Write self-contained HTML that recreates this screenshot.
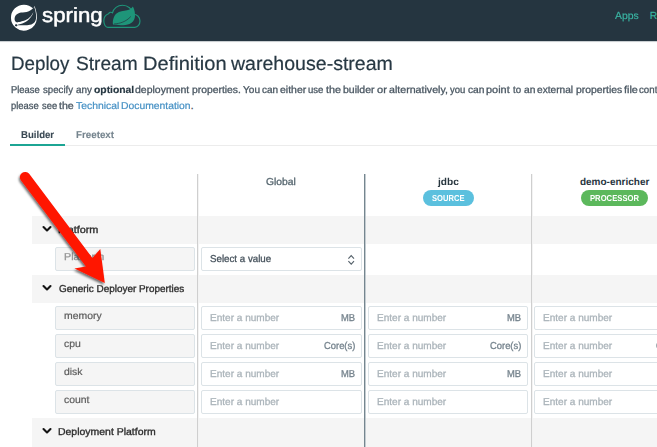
<!DOCTYPE html>
<html><head><meta charset="utf-8"><style>
html,body{margin:0;padding:0;}
body{width:657px;height:447px;overflow:hidden;position:relative;background:#fff;font-family:"Liberation Sans",sans-serif;text-rendering:geometricPrecision;}
</style></head><body>
<div style="position:absolute;left:0px;top:0px;width:657px;height:41px;background:#253540;"></div>
<div style="position:absolute;left:0px;top:41px;width:657px;height:1px;background:#c9ced1;"></div>
<div style="position:absolute;left:0px;top:42px;width:657px;height:1px;background:#fbfbfb;"></div>
<svg style="position:absolute;left:0;top:0" width="150" height="40" viewBox="0 0 150 40">
<g transform="translate(11,4.64) scale(0.405)"><path fill="#fff" d="M58.2,3.365a29.503,29.503,0,0,1-3.419,6.064A32.094,32.094,0,1,0,9.965,55.372l1.186,1.047a32.08,32.08,0,0,0,52.67-22.253C64.7,26.08,62.4,15.722,58.2,3.365ZM14.731,52.619a2.725,2.725,0,1,1-.222-3.844A2.723,2.723,0,0,1,14.731,52.619Z"/></g>
<g transform="translate(36.2,25.5) scale(1.21,1.1) translate(-35.8,-25.3) translate(11,4.64) scale(0.405)"><path fill="#253540" d="M58.309,43.01c-7.924,10.561-24.85,7.0-35.7,7.511,0,0-1.923.115-3.859.432,0,0,.728-.31,1.669-.663,7.618-2.651,11.22-3.166,15.851-5.546,8.7-4.437,17.34-14.149,19.108-24.232C52.064,30.292,43.824,37.6,36.3,40.384c-5.149,1.9-14.459,3.747-14.459,3.747l-.38-.2c-6.343-3.085-6.531-16.826,5-21.254,5.051-1.944,9.88-.877,15.337-2.178,5.822-1.385,12.56-5.755,15.3-11.456C60.168,18.064,63.958,35.5,58.309,43.01Z"/></g>
<path d="M107.8,27.3 L134.8,27.3 C137.8,27.3 140,24.4 140,21 C140,17.3 137.2,14.3 133.4,14.3 C132.3,9 127.8,5.2 122.5,5.2 C117.6,5.2 113.5,8.5 112.5,12.8 C111,11.8 109,12.2 108.5,13.8 C105.8,14.8 103.8,17.6 103.8,20.8 C103.8,24.5 105.6,27.3 107.8,27.3 Z" fill="none" stroke="#1e9579" stroke-width="1.15"/>
<path d="M113,24.6 C112.4,21 113.5,15.8 116.5,13.4 C119.5,11.2 123.5,10.8 127,10.3 C129.8,9.8 131.5,8.6 132.9,6.6 C134.6,9.5 135.4,14 134.9,17 C134.5,20.2 132.5,22.6 129.5,24 C125.5,25.6 118,25.4 113,24.6 Z" fill="#1e9579"/>
<path d="M114,24 C120,23.5 126,21.8 130.8,16.5" fill="none" stroke="#253540" stroke-width="0.7"/>
</svg>
<div style="position:absolute;left:41.68px;top:16px;font-size:20.5px;line-height:0;white-space:nowrap;color:#ffffff;font-weight:normal;transform:scaleX(1.0861);transform-origin:0 0;-webkit-text-stroke:0.5px #ffffff;">spring</div>
<div style="position:absolute;left:614.58px;top:17px;font-size:10.3px;line-height:0;white-space:nowrap;color:#3ab5a3;font-weight:normal;transform:scaleX(1.0138);transform-origin:0 0;-webkit-text-stroke:0.15px #3ab5a3;">Apps</div>
<div style="position:absolute;left:649.66px;top:17px;font-size:10.3px;line-height:0;white-space:nowrap;color:#3ab5a3;font-weight:normal;-webkit-text-stroke:0.15px #3ab5a3;">R</div>
<div style="position:absolute;left:11.16px;top:64px;font-size:19.37px;line-height:0;white-space:nowrap;color:#273843;font-weight:normal;transform:scaleX(0.9698);transform-origin:0 0;-webkit-text-stroke:0.2px #273843;">Deploy</div>
<div style="position:absolute;left:75.54px;top:64px;font-size:19.37px;line-height:0;white-space:nowrap;color:#273843;font-weight:normal;transform:scaleX(0.9887);transform-origin:0 0;-webkit-text-stroke:0.2px #273843;">Stream</div>
<div style="position:absolute;left:142.55px;top:64px;font-size:19.37px;line-height:0;white-space:nowrap;color:#273843;font-weight:normal;transform:scaleX(1.0359);transform-origin:0 0;-webkit-text-stroke:0.2px #273843;">Definition</div>
<div style="position:absolute;left:231.12px;top:64px;font-size:19.37px;line-height:0;white-space:nowrap;color:#273843;font-weight:normal;transform:scaleX(1.0098);transform-origin:0 0;-webkit-text-stroke:0.2px #273843;">warehouse-stream</div>
<div style="position:absolute;left:10.93px;top:91px;font-size:10px;line-height:0;white-space:nowrap;color:#4a5762;font-weight:normal;transform:scaleX(0.9417);transform-origin:0 0;-webkit-text-stroke:0.3px #4a5762;">Please</div>
<div style="position:absolute;left:42.73px;top:91px;font-size:10px;line-height:0;white-space:nowrap;color:#4a5762;font-weight:normal;transform:scaleX(0.9669);transform-origin:0 0;-webkit-text-stroke:0.3px #4a5762;">specify</div>
<div style="position:absolute;left:75.58px;top:91px;font-size:10px;line-height:0;white-space:nowrap;color:#4a5762;font-weight:normal;transform:scaleX(0.9885);transform-origin:0 0;-webkit-text-stroke:0.3px #4a5762;">any</div>
<div style="position:absolute;left:93.70px;top:91px;font-size:10px;line-height:0;white-space:nowrap;color:#273843;font-weight:bold;transform:scaleX(1.0349);transform-origin:0 0;-webkit-text-stroke:0.15px #273843;">optional</div>
<div style="position:absolute;left:135.46px;top:91px;font-size:10px;line-height:0;white-space:nowrap;color:#4a5762;font-weight:normal;transform:scaleX(1.0486);transform-origin:0 0;-webkit-text-stroke:0.3px #4a5762;">deployment</div>
<div style="position:absolute;left:192.14px;top:91px;font-size:10px;line-height:0;white-space:nowrap;color:#4a5762;font-weight:normal;transform:scaleX(1.0350);transform-origin:0 0;-webkit-text-stroke:0.3px #4a5762;">properties.</div>
<div style="position:absolute;left:242.98px;top:91px;font-size:10px;line-height:0;white-space:nowrap;color:#4a5762;font-weight:normal;transform:scaleX(1.0069);transform-origin:0 0;-webkit-text-stroke:0.3px #4a5762;">You</div>
<div style="position:absolute;left:261.68px;top:91px;font-size:10px;line-height:0;white-space:nowrap;color:#4a5762;font-weight:normal;transform:scaleX(0.9967);transform-origin:0 0;-webkit-text-stroke:0.3px #4a5762;">can</div>
<div style="position:absolute;left:279.86px;top:91px;font-size:10px;line-height:0;white-space:nowrap;color:#4a5762;font-weight:normal;transform:scaleX(1.0479);transform-origin:0 0;-webkit-text-stroke:0.3px #4a5762;">either</div>
<div style="position:absolute;left:308.48px;top:91px;font-size:10px;line-height:0;white-space:nowrap;color:#4a5762;font-weight:normal;transform:scaleX(0.9581);transform-origin:0 0;-webkit-text-stroke:0.3px #4a5762;">use</div>
<div style="position:absolute;left:325.94px;top:91px;font-size:10px;line-height:0;white-space:nowrap;color:#4a5762;font-weight:normal;transform:scaleX(1.0819);transform-origin:0 0;-webkit-text-stroke:0.3px #4a5762;">the</div>
<div style="position:absolute;left:342.83px;top:91px;font-size:10px;line-height:0;white-space:nowrap;color:#4a5762;font-weight:normal;transform:scaleX(1.0507);transform-origin:0 0;-webkit-text-stroke:0.3px #4a5762;">builder</div>
<div style="position:absolute;left:376.74px;top:91px;font-size:10px;line-height:0;white-space:nowrap;color:#4a5762;font-weight:normal;transform:scaleX(1.1071);transform-origin:0 0;-webkit-text-stroke:0.3px #4a5762;">or</div>
<div style="position:absolute;left:388.65px;top:91px;font-size:10px;line-height:0;white-space:nowrap;color:#4a5762;font-weight:normal;transform:scaleX(1.0632);transform-origin:0 0;-webkit-text-stroke:0.3px #4a5762;">alternatively,</div>
<div style="position:absolute;left:450.27px;top:91px;font-size:10px;line-height:0;white-space:nowrap;color:#4a5762;font-weight:normal;transform:scaleX(0.9527);transform-origin:0 0;-webkit-text-stroke:0.3px #4a5762;">you</div>
<div style="position:absolute;left:467.97px;top:91px;font-size:10px;line-height:0;white-space:nowrap;color:#4a5762;font-weight:normal;transform:scaleX(1.0233);transform-origin:0 0;-webkit-text-stroke:0.3px #4a5762;">can</div>
<div style="position:absolute;left:486.30px;top:91px;font-size:10px;line-height:0;white-space:nowrap;color:#4a5762;font-weight:normal;transform:scaleX(1.0915);transform-origin:0 0;-webkit-text-stroke:0.3px #4a5762;">point</div>
<div style="position:absolute;left:512.86px;top:91px;font-size:10px;line-height:0;white-space:nowrap;color:#4a5762;font-weight:normal;transform:scaleX(0.9653);transform-origin:0 0;-webkit-text-stroke:0.3px #4a5762;">to</div>
<div style="position:absolute;left:523.87px;top:91px;font-size:10px;line-height:0;white-space:nowrap;color:#4a5762;font-weight:normal;transform:scaleX(1.0249);transform-origin:0 0;-webkit-text-stroke:0.3px #4a5762;">an</div>
<div style="position:absolute;left:537.27px;top:91px;font-size:10px;line-height:0;white-space:nowrap;color:#4a5762;font-weight:normal;transform:scaleX(1.0151);transform-origin:0 0;-webkit-text-stroke:0.3px #4a5762;">external</div>
<div style="position:absolute;left:576.13px;top:91px;font-size:10px;line-height:0;white-space:nowrap;color:#4a5762;font-weight:normal;transform:scaleX(1.0398);transform-origin:0 0;-webkit-text-stroke:0.3px #4a5762;">properties</div>
<div style="position:absolute;left:624.25px;top:91px;font-size:10px;line-height:0;white-space:nowrap;color:#4a5762;font-weight:normal;transform:scaleX(1.0820);transform-origin:0 0;-webkit-text-stroke:0.3px #4a5762;">file</div>
<div style="position:absolute;left:639.49px;top:91px;font-size:10px;line-height:0;white-space:nowrap;color:#4a5762;font-weight:normal;transform:scaleX(0.9700);transform-origin:0 0;-webkit-text-stroke:0.3px #4a5762;">containing</div>
<div style="position:absolute;left:11.10px;top:107px;font-size:10px;line-height:0;white-space:nowrap;color:#4a5762;font-weight:normal;transform:scaleX(0.9405);transform-origin:0 0;-webkit-text-stroke:0.3px #4a5762;">please</div>
<div style="position:absolute;left:41.54px;top:107px;font-size:10px;line-height:0;white-space:nowrap;color:#4a5762;font-weight:normal;transform:scaleX(0.9351);transform-origin:0 0;-webkit-text-stroke:0.3px #4a5762;">see</div>
<div style="position:absolute;left:59.14px;top:107px;font-size:10px;line-height:0;white-space:nowrap;color:#4a5762;font-weight:normal;transform:scaleX(1.0594);transform-origin:0 0;-webkit-text-stroke:0.3px #4a5762;">the</div>
<div style="position:absolute;left:75.87px;top:107px;font-size:10px;line-height:0;white-space:nowrap;color:#4590c4;font-weight:normal;transform:scaleX(1.0392);transform-origin:0 0;-webkit-text-stroke:0.2px #4590c4;">Technical</div>
<div style="position:absolute;left:121.25px;top:107px;font-size:10px;line-height:0;white-space:nowrap;color:#4590c4;font-weight:normal;transform:scaleX(1.0351);transform-origin:0 0;-webkit-text-stroke:0.2px #4590c4;">Documentation</div>
<div style="position:absolute;left:190.69px;top:107px;font-size:10px;line-height:0;white-space:nowrap;color:#4a5762;font-weight:normal;-webkit-text-stroke:0.3px #4a5762;">.</div>
<div style="position:absolute;left:21.36px;top:136px;font-size:10px;line-height:0;white-space:nowrap;color:#3a4954;font-weight:bold;transform:scaleX(0.9605);transform-origin:0 0;-webkit-text-stroke:0.1px #3a4954;">Builder</div>
<div style="position:absolute;left:76.04px;top:136px;font-size:10px;line-height:0;white-space:nowrap;color:#75848e;font-weight:bold;transform:scaleX(0.9785);transform-origin:0 0;-webkit-text-stroke:0.1px #75848e;">Freetext</div>
<div style="position:absolute;left:10px;top:145px;width:647px;height:1px;background:#ececec;"></div>
<div style="position:absolute;left:10px;top:144px;width:55px;height:2px;background:#1ca594;"></div>
<div style="position:absolute;left:32px;top:216px;width:625px;height:28px;background:#f5f5f5;"></div>
<div style="position:absolute;left:32px;top:275px;width:625px;height:28px;background:#f5f5f5;"></div>
<div style="position:absolute;left:32px;top:418px;width:625px;height:29px;background:#f5f5f5;"></div>
<div style="position:absolute;left:197px;top:174px;width:1px;height:273px;background:#cfcfcf;"></div>
<div style="position:absolute;left:198px;top:174px;width:1px;height:273px;background:#f3f3f3;"></div>
<div style="position:absolute;left:364px;top:174px;width:1px;height:273px;background:#75868f;"></div>
<div style="position:absolute;left:365px;top:174px;width:1px;height:273px;background:#c4ccd1;"></div>
<div style="position:absolute;left:531px;top:174px;width:1px;height:273px;background:#cfcfcf;"></div>
<div style="position:absolute;left:532px;top:174px;width:1px;height:273px;background:#f3f3f3;"></div>
<div style="position:absolute;left:266.48px;top:183px;font-size:10px;line-height:0;white-space:nowrap;color:#56666f;font-weight:normal;transform:scaleX(1.0314);transform-origin:0 0;-webkit-text-stroke:0.3px #56666f;">Global</div>
<div style="position:absolute;left:437.56px;top:183px;font-size:10px;line-height:0;white-space:nowrap;color:#28363f;font-weight:bold;transform:scaleX(1.0132);transform-origin:0 0;">jdbc</div>
<div style="position:absolute;left:579.89px;top:183px;font-size:10px;line-height:0;white-space:nowrap;color:#28363f;font-weight:bold;">demo-enricher</div>
<div style="position:absolute;left:423px;top:190px;width:51px;height:16px;background:#5bc0de;border-radius:8px;"></div>
<div style="position:absolute;left:431.78px;top:198px;font-size:8.7px;line-height:0;white-space:nowrap;color:#ffffff;font-weight:bold;transform:scaleX(0.8737);transform-origin:0 0;">SOURCE</div>
<div style="position:absolute;left:581px;top:190px;width:67px;height:16px;background:#5cb85c;border-radius:8px;"></div>
<div style="position:absolute;left:589.99px;top:198px;font-size:8.7px;line-height:0;white-space:nowrap;color:#ffffff;font-weight:bold;transform:scaleX(0.8828);transform-origin:0 0;">PROCESSOR</div>
<svg style="position:absolute;left:39.3px;top:223.0px" width="16" height="12" viewBox="39.3 223.0 16 12"><polyline points="43.8,227.0 47.3,230.5 50.8,227.0" fill="none" stroke="#141414" stroke-width="2.1" stroke-linecap="round" stroke-linejoin="round"/></svg>
<svg style="position:absolute;left:39.3px;top:282.2px" width="16" height="12" viewBox="39.3 282.2 16 12"><polyline points="43.8,286.2 47.3,289.7 50.8,286.2" fill="none" stroke="#141414" stroke-width="2.1" stroke-linecap="round" stroke-linejoin="round"/></svg>
<svg style="position:absolute;left:39.3px;top:424.9px" width="16" height="12" viewBox="39.3 424.9 16 12"><polyline points="43.8,428.9 47.3,432.4 50.8,428.9" fill="none" stroke="#141414" stroke-width="2.1" stroke-linecap="round" stroke-linejoin="round"/></svg>
<div style="position:absolute;left:58.11px;top:231px;font-size:10px;line-height:0;white-space:nowrap;color:#2e2e2e;font-weight:normal;transform:scaleX(1.0853);transform-origin:0 0;-webkit-text-stroke:0.35px #2e2e2e;">Platform</div>
<div style="position:absolute;left:58.50px;top:290px;font-size:10px;line-height:0;white-space:nowrap;color:#2e2e2e;font-weight:normal;transform:scaleX(0.9927);transform-origin:0 0;-webkit-text-stroke:0.35px #2e2e2e;">Generic Deployer Properties</div>
<div style="position:absolute;left:57.74px;top:433px;font-size:10px;line-height:0;white-space:nowrap;color:#2e2e2e;font-weight:normal;transform:scaleX(1.0458);transform-origin:0 0;-webkit-text-stroke:0.35px #2e2e2e;">Deployment Platform</div>
<div style="position:absolute;box-sizing:border-box;left:55px;top:247px;width:140px;height:24px;background:#f5f5f5;border:1px solid #dce3e7;border-radius:2px;"></div>
<div style="position:absolute;left:63.51px;top:258px;font-size:10px;line-height:0;white-space:nowrap;color:#959595;font-weight:normal;transform:scaleX(1.0797);transform-origin:0 0;-webkit-text-stroke:0.3px #959595;">Platform</div>
<div style="position:absolute;box-sizing:border-box;left:55px;top:306px;width:140px;height:24px;background:#f5f5f5;border:1px solid #dce3e7;border-radius:2px;"></div>
<div style="position:absolute;left:63.51px;top:317px;font-size:10px;line-height:0;white-space:nowrap;color:#5c5c5c;font-weight:normal;transform:scaleX(1.0415);transform-origin:0 0;-webkit-text-stroke:0.2px #5c5c5c;">memory</div>
<div style="position:absolute;box-sizing:border-box;left:55px;top:334px;width:140px;height:24px;background:#f5f5f5;border:1px solid #dce3e7;border-radius:2px;"></div>
<div style="position:absolute;left:63.76px;top:345px;font-size:10px;line-height:0;white-space:nowrap;color:#5c5c5c;font-weight:normal;transform:scaleX(1.0415);transform-origin:0 0;-webkit-text-stroke:0.2px #5c5c5c;">cpu</div>
<div style="position:absolute;box-sizing:border-box;left:55px;top:362px;width:140px;height:24px;background:#f5f5f5;border:1px solid #dce3e7;border-radius:2px;"></div>
<div style="position:absolute;left:63.76px;top:373px;font-size:10px;line-height:0;white-space:nowrap;color:#5c5c5c;font-weight:normal;transform:scaleX(1.0415);transform-origin:0 0;-webkit-text-stroke:0.2px #5c5c5c;">disk</div>
<div style="position:absolute;box-sizing:border-box;left:55px;top:390px;width:140px;height:24px;background:#f5f5f5;border:1px solid #dce3e7;border-radius:2px;"></div>
<div style="position:absolute;left:63.76px;top:401px;font-size:10px;line-height:0;white-space:nowrap;color:#5c5c5c;font-weight:normal;transform:scaleX(1.0415);transform-origin:0 0;-webkit-text-stroke:0.2px #5c5c5c;">count</div>
<div style="position:absolute;box-sizing:border-box;left:201px;top:247px;width:161px;height:24px;background:#ffffff;border:1px solid #dce3e7;border-radius:2px;"></div>
<div style="position:absolute;left:210.06px;top:260px;font-size:10px;line-height:0;white-space:nowrap;color:#46525c;font-weight:normal;transform:scaleX(0.9737);transform-origin:0 0;-webkit-text-stroke:0.3px #46525c;">Select a value</div>
<svg style="position:absolute;left:345px;top:252px" width="12" height="16" viewBox="345 252 12 16"><polyline points="348.4,258.6 351.2,255.7 354,258.6" fill="none" stroke="#56626b" stroke-width="1.15"/><polyline points="348.4,261.2 351.2,264.1 354,261.2" fill="none" stroke="#56626b" stroke-width="1.15"/></svg>
<div style="position:absolute;box-sizing:border-box;left:201px;top:306px;width:161px;height:24px;background:#ffffff;border:1px solid #dce3e7;border-radius:2px;"></div>
<div style="position:absolute;left:209.68px;top:319px;font-size:10px;line-height:0;white-space:nowrap;color:#abb4ba;font-weight:normal;transform:scaleX(1.0037);transform-origin:0 0;-webkit-text-stroke:0.3px #abb4ba;">Enter a number</div>
<div style="position:absolute;left:341.20px;top:319px;font-size:10px;line-height:0;white-space:nowrap;color:#74828c;font-weight:normal;transform:scaleX(0.9400);transform-origin:0 0;-webkit-text-stroke:0.3px #74828c;">MB</div>
<div style="position:absolute;box-sizing:border-box;left:201px;top:334px;width:161px;height:24px;background:#ffffff;border:1px solid #dce3e7;border-radius:2px;"></div>
<div style="position:absolute;left:209.68px;top:347px;font-size:10px;line-height:0;white-space:nowrap;color:#abb4ba;font-weight:normal;transform:scaleX(1.0037);transform-origin:0 0;-webkit-text-stroke:0.3px #abb4ba;">Enter a number</div>
<div style="position:absolute;left:324.04px;top:347px;font-size:10px;line-height:0;white-space:nowrap;color:#74828c;font-weight:normal;transform:scaleX(0.9400);transform-origin:0 0;-webkit-text-stroke:0.3px #74828c;">Core(s)</div>
<div style="position:absolute;box-sizing:border-box;left:201px;top:362px;width:161px;height:24px;background:#ffffff;border:1px solid #dce3e7;border-radius:2px;"></div>
<div style="position:absolute;left:209.68px;top:375px;font-size:10px;line-height:0;white-space:nowrap;color:#abb4ba;font-weight:normal;transform:scaleX(1.0037);transform-origin:0 0;-webkit-text-stroke:0.3px #abb4ba;">Enter a number</div>
<div style="position:absolute;left:341.20px;top:375px;font-size:10px;line-height:0;white-space:nowrap;color:#74828c;font-weight:normal;transform:scaleX(0.9400);transform-origin:0 0;-webkit-text-stroke:0.3px #74828c;">MB</div>
<div style="position:absolute;box-sizing:border-box;left:201px;top:390px;width:161px;height:24px;background:#ffffff;border:1px solid #dce3e7;border-radius:2px;"></div>
<div style="position:absolute;left:209.68px;top:403px;font-size:10px;line-height:0;white-space:nowrap;color:#abb4ba;font-weight:normal;transform:scaleX(1.0037);transform-origin:0 0;-webkit-text-stroke:0.3px #abb4ba;">Enter a number</div>
<div style="position:absolute;box-sizing:border-box;left:368px;top:306px;width:160px;height:24px;background:#ffffff;border:1px solid #dce3e7;border-radius:2px;"></div>
<div style="position:absolute;left:376.68px;top:319px;font-size:10px;line-height:0;white-space:nowrap;color:#abb4ba;font-weight:normal;transform:scaleX(1.0037);transform-origin:0 0;-webkit-text-stroke:0.3px #abb4ba;">Enter a number</div>
<div style="position:absolute;left:507.20px;top:319px;font-size:10px;line-height:0;white-space:nowrap;color:#74828c;font-weight:normal;transform:scaleX(0.9400);transform-origin:0 0;-webkit-text-stroke:0.3px #74828c;">MB</div>
<div style="position:absolute;box-sizing:border-box;left:368px;top:334px;width:160px;height:24px;background:#ffffff;border:1px solid #dce3e7;border-radius:2px;"></div>
<div style="position:absolute;left:376.68px;top:347px;font-size:10px;line-height:0;white-space:nowrap;color:#abb4ba;font-weight:normal;transform:scaleX(1.0037);transform-origin:0 0;-webkit-text-stroke:0.3px #abb4ba;">Enter a number</div>
<div style="position:absolute;left:490.04px;top:347px;font-size:10px;line-height:0;white-space:nowrap;color:#74828c;font-weight:normal;transform:scaleX(0.9400);transform-origin:0 0;-webkit-text-stroke:0.3px #74828c;">Core(s)</div>
<div style="position:absolute;box-sizing:border-box;left:368px;top:362px;width:160px;height:24px;background:#ffffff;border:1px solid #dce3e7;border-radius:2px;"></div>
<div style="position:absolute;left:376.68px;top:375px;font-size:10px;line-height:0;white-space:nowrap;color:#abb4ba;font-weight:normal;transform:scaleX(1.0037);transform-origin:0 0;-webkit-text-stroke:0.3px #abb4ba;">Enter a number</div>
<div style="position:absolute;left:507.20px;top:375px;font-size:10px;line-height:0;white-space:nowrap;color:#74828c;font-weight:normal;transform:scaleX(0.9400);transform-origin:0 0;-webkit-text-stroke:0.3px #74828c;">MB</div>
<div style="position:absolute;box-sizing:border-box;left:368px;top:390px;width:160px;height:24px;background:#ffffff;border:1px solid #dce3e7;border-radius:2px;"></div>
<div style="position:absolute;left:376.68px;top:403px;font-size:10px;line-height:0;white-space:nowrap;color:#abb4ba;font-weight:normal;transform:scaleX(1.0037);transform-origin:0 0;-webkit-text-stroke:0.3px #abb4ba;">Enter a number</div>
<div style="position:absolute;box-sizing:border-box;left:534px;top:306px;width:160px;height:24px;background:#ffffff;border:1px solid #dce3e7;border-radius:2px;"></div>
<div style="position:absolute;left:542.68px;top:319px;font-size:10px;line-height:0;white-space:nowrap;color:#abb4ba;font-weight:normal;transform:scaleX(1.0037);transform-origin:0 0;-webkit-text-stroke:0.3px #abb4ba;">Enter a number</div>
<div style="position:absolute;left:673.20px;top:319px;font-size:10px;line-height:0;white-space:nowrap;color:#74828c;font-weight:normal;transform:scaleX(0.9400);transform-origin:0 0;-webkit-text-stroke:0.3px #74828c;">MB</div>
<div style="position:absolute;box-sizing:border-box;left:534px;top:334px;width:160px;height:24px;background:#ffffff;border:1px solid #dce3e7;border-radius:2px;"></div>
<div style="position:absolute;left:542.68px;top:347px;font-size:10px;line-height:0;white-space:nowrap;color:#abb4ba;font-weight:normal;transform:scaleX(1.0037);transform-origin:0 0;-webkit-text-stroke:0.3px #abb4ba;">Enter a number</div>
<div style="position:absolute;left:656.04px;top:347px;font-size:10px;line-height:0;white-space:nowrap;color:#74828c;font-weight:normal;transform:scaleX(0.9400);transform-origin:0 0;-webkit-text-stroke:0.3px #74828c;">Core(s)</div>
<div style="position:absolute;box-sizing:border-box;left:534px;top:362px;width:160px;height:24px;background:#ffffff;border:1px solid #dce3e7;border-radius:2px;"></div>
<div style="position:absolute;left:542.68px;top:375px;font-size:10px;line-height:0;white-space:nowrap;color:#abb4ba;font-weight:normal;transform:scaleX(1.0037);transform-origin:0 0;-webkit-text-stroke:0.3px #abb4ba;">Enter a number</div>
<div style="position:absolute;left:673.20px;top:375px;font-size:10px;line-height:0;white-space:nowrap;color:#74828c;font-weight:normal;transform:scaleX(0.9400);transform-origin:0 0;-webkit-text-stroke:0.3px #74828c;">MB</div>
<div style="position:absolute;box-sizing:border-box;left:534px;top:390px;width:160px;height:24px;background:#ffffff;border:1px solid #dce3e7;border-radius:2px;"></div>
<div style="position:absolute;left:542.68px;top:403px;font-size:10px;line-height:0;white-space:nowrap;color:#abb4ba;font-weight:normal;transform:scaleX(1.0037);transform-origin:0 0;-webkit-text-stroke:0.3px #abb4ba;">Enter a number</div>
<svg style="position:absolute;left:0;top:0" width="657" height="447">
<defs><filter id="sh" x="-20%" y="-20%" width="140%" height="140%"><feGaussianBlur in="SourceAlpha" stdDeviation="1.2"/><feOffset dx="-1.5" dy="1.5" result="o"/><feFlood flood-color="#000" flood-opacity="0.55"/><feComposite in2="o" operator="in"/><feMerge><feMergeNode/><feMergeNode in="SourceGraphic"/></feMerge></filter></defs>
<path filter="url(#sh)" fill="#ff1505" d="M29.15,173.87 L92.4,257.9 L100.3,249 L104.8,283 L74.5,268.6 L85.9,266.5 L20.85,180.13 A5.2,5.2 0 0,1 29.15,173.87 Z"/>
</svg>
</body></html>
